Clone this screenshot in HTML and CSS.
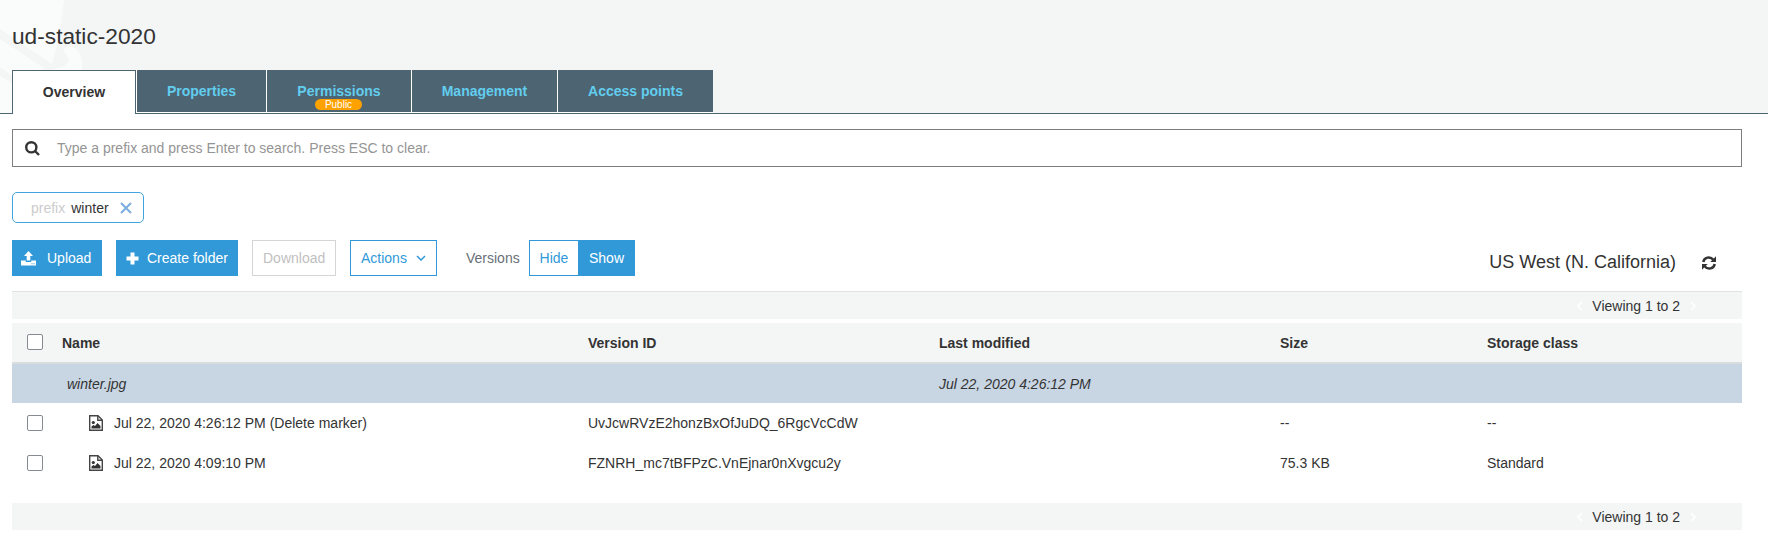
FILE: index.html
```html
<!DOCTYPE html>
<html lang="en">
<head>
<meta charset="utf-8">
<title>ud-static-2020</title>
<link rel="stylesheet" href="styles.css">
</head>
<body>
<header class="header">
  <svg class="watermark" width="100" height="113" viewBox="0 0 100 113"><path class="wm-light" d="M0 0H64Q61 32 52 64L0 29z"/><path class="wm-light" d="M0 39L44 68L41 76L12 76L0 67zM0 76L12 83V113H0z"/><path class="wm-light" d="M63 50Q67 45 73 47Q83 52 82 70H52L62 67Q71 63 68 57z"/></svg>
  <h1 class="title">ud-static-2020</h1>
  <nav class="tabs">
    <a class="tab tab-active">Overview</a>
    <a class="tab tab-properties">Properties</a>
    <a class="tab tab-permissions">Permissions<span class="badge">Public</span></a>
    <a class="tab tab-management">Management</a>
    <a class="tab tab-access">Access points</a>
  </nav>
</header>
<main class="main">
  <div class="search">
    <svg class="search-icon" width="15" height="15" viewBox="0 0 15 15"><circle cx="6.3" cy="6.3" r="5.1"/><path d="M10 10L14 14"/></svg>
    <span>Type a prefix and press Enter to search. Press ESC to clear.</span>
  </div>
  <div class="chip">
    <span class="chip-key">prefix</span><span class="chip-value">winter</span>
    <svg class="chip-close" width="12" height="12" viewBox="0 0 12 12"><path d="M1 1L11 11M11 1L1 11"/></svg>
  </div>
  <div class="toolbar">
    <button class="btn primary upload"><svg width="15" height="15" viewBox="0 0 15 15"><path d="M7.5 0L12 5H9.3V9.5H5.7V5H3z"/><path fill-rule="evenodd" d="M0 9.5H4.8V11H10.2V9.5H15V14.5H0zM10.5 12.3h1v1h-1zM12.6 12.3h1v1h-1z"/></svg>Upload</button>
    <button class="btn primary create"><svg width="13" height="13" viewBox="0 0 13 13"><path d="M4.500 0.500H8.500V4.500H12.500V8.500H8.500V12.500H4.500V8.500H0.500V4.500H4.500z"/></svg>Create folder</button>
    <button class="btn disabled">Download</button>
    <button class="btn outline">Actions<svg class="chevron" width="10" height="6" viewBox="0 0 10 6"><path d="M1 1L5 5L9 1"/></svg></button>
    <span class="versions">Versions</span>
    <div class="toggle"><span class="hide">Hide</span><span class="show">Show</span></div>
    <span class="region">US West (N. California)</span>
    <svg class="refresh" width="14" height="14" viewBox="0 0 14 14"><path class="arc" d="M1.300 6C2 1.200 8.200-.200 11.300 3.800M12.700 8C12 12.800 5.800 14.200 2.700 10.200"/><path d="M14 .3V6H8.300zM0 13.700V8H5.700z"/></svg>
  </div>
  <div class="pager pager-top">
    <svg class="arrow" width="6" height="10" viewBox="0 0 6 10"><path d="M5 1L1 5L5 9"/></svg><span>Viewing 1 to 2</span><svg class="arrow" width="6" height="10" viewBox="0 0 6 10"><path d="M1 1L5 5L1 9"/></svg>
  </div>
  <div class="grid head">
    <span class="check"></span><span>Name</span><span>Version ID</span><span>Last modified</span><span>Size</span><span>Storage class</span>
  </div>
  <div class="grid group">
    <span></span><span class="group-name">winter.jpg</span><span></span><span>Jul 22, 2020 4:26:12 PM</span><span></span><span></span>
  </div>
  <div class="grid row">
    <span class="check"></span>
    <span class="file"><svg width="14" height="16" viewBox="0 0 14 16"><path class="page" d="M.7.7H9L13.300 5V15.300H.7z"/><path class="fold" d="M8.800 1V5.300H13"/><circle cx="4.300" cy="7.500" r="1.600"/><path d="M2.500 13.500V11.500L4.500 10L6 11L8.500 8L11.500 11V13.500z"/></svg>Jul 22, 2020 4:26:12 PM (Delete marker)</span>
    <span>UvJcwRVzE2honzBxOfJuDQ_6RgcVcCdW</span><span></span><span>--</span><span>--</span>
  </div>
  <div class="grid row">
    <span class="check"></span>
    <span class="file"><svg width="14" height="16" viewBox="0 0 14 16"><path class="page" d="M.7.7H9L13.300 5V15.300H.7z"/><path class="fold" d="M8.800 1V5.300H13"/><circle cx="4.300" cy="7.500" r="1.600"/><path d="M2.500 13.500V11.500L4.500 10L6 11L8.500 8L11.500 11V13.500z"/></svg>Jul 22, 2020 4:09:10 PM</span>
    <span>FZNRH_mc7tBFPzC.VnEjnar0nXvgcu2y</span><span></span><span>75.3 KB</span><span>Standard</span>
  </div>
  <div class="pager pager-bottom">
    <svg class="arrow" width="6" height="10" viewBox="0 0 6 10"><path d="M5 1L1 5L5 9"/></svg><span>Viewing 1 to 2</span><svg class="arrow" width="6" height="10" viewBox="0 0 6 10"><path d="M1 1L5 5L1 9"/></svg>
  </div>
</main>
</body>
</html>
```
FILE: styles.css
```css
* { box-sizing: border-box; }
body { margin: 0; background: #fff; color: #333; font: 14px/20px "Liberation Sans", Arial, sans-serif; overflow: hidden; }
svg { display: block; flex: none; }
.header { position: relative; height: 114px; padding: 22px 12px 0; background: #f4f6f6; border-bottom: 1px solid #4d6472; }
.watermark { position: absolute; left: 0; top: 0; }
.wm-light { fill: #fafcfb; }
.title { position: relative; margin: 0 0 20px; font-size: 22.7px; font-weight: 400; line-height: 28px; }
.tabs { position: relative; display: flex; align-items: flex-start; gap: 1px; width: 701px; height: 43px; background: #fff; }
.tab { position: relative; height: 42px; background: #4d6472; color: #62cdee; font-weight: 700; line-height: 42px; text-align: center; }
.tab-active { width: 124px; height: 44px; background: #fff; border: 1px solid #4d6472; border-bottom: 0; color: #333; }
.tab-properties { width: 129px; }
.tab-permissions { width: 144px; }
.tab-management { width: 145px; }
.tab-access { width: 155px; }
.badge { position: absolute; left: 48px; top: 29px; width: 47px; height: 11px; border-radius: 6px; background: #ffa200; color: #fff; font-size: 10px; font-weight: 400; line-height: 11px; }
.main { padding: 15px 26px 0 12px; }
.search { display: flex; align-items: center; height: 38px; padding-left: 12px; border: 1px solid #7d7d7d; color: #959595; }
.search svg { margin-right: 17px; fill: none; stroke: #333; stroke-width: 2.400; }
.chip { display: flex; align-items: center; width: 132px; height: 31px; margin-top: 25px; padding-left: 18px; border: 1px solid #42a4de; border-radius: 5px; line-height: 31px; }
.chip-key, .chip-value { padding-top: 1px; }
.chip-key { color: #ccc; margin-right: 6px; }
.chip-close { margin-left: 11px; fill: none; stroke: #7badde; stroke-width: 2; }
.toolbar { display: flex; height: 51px; margin-top: 17px; }
.btn { display: flex; align-items: center; height: 36px; padding: 0 10px; border: 1px solid; font: inherit; white-space: nowrap; }
.primary { background: #3199d8; border-color: #3199d8; color: #fff; }
.primary svg { fill: #fff; }
.upload { width: 90px; padding-left: 8px; margin-right: 14px; }
.upload svg { margin-right: 11px; }
.create { width: 122px; padding-left: 9px; margin-right: 14px; }
.create svg { margin-right: 8px; }
.disabled { width: 84px; margin-right: 14px; background: #fff; border-color: #d5d5d5; color: #bfbfbf; }
.outline { width: 87px; background: #fff; border-color: #3199d8; color: #3199d8; }
.chevron { margin-left: 9px; fill: none; stroke: #3199d8; stroke-width: 1.500; }
.versions { margin-left: 29px; width: 63px; line-height: 36px; color: #687078; }
.toggle { display: flex; width: 106px; height: 36px; border: 1px solid #3199d8; line-height: 34px; text-align: center; }
.hide { width: 48px; color: #3199d8; }
.show { flex: 1; padding-left: 1px; background: #3199d8; color: #fff; }
.region { margin-left: auto; font-size: 18px; line-height: 45px; }
.refresh { margin: 16px 26px 0; fill: #333; }
.arc { fill: none; stroke: #333; stroke-width: 2.500; }
.pager { display: flex; align-items: center; justify-content: flex-end; gap: 10px; background: #f4f6f6; }
.arrow { fill: none; stroke: #fff; stroke-width: 1.500; }
.pager-top { height: 28px; padding-right: 46px; border-top: 1px solid #dfe3e3; }
.pager-bottom { height: 27px; margin-top: 20px; padding-right: 46px; }
.pager .arrow:first-child { margin-right: -1px; }
.grid { display: grid; grid-template-columns: 50px 526px 351px 341px 207px 255px; align-items: center; height: 40px; }
.head { height: 41px; margin-top: 4px; background: #f4f6f6; border-bottom: 2px solid #d9dddd; font-weight: 700; }
.group { height: 39px; background: #c8d5e3; font-style: italic; }
.group-name { padding-left: 5px; }
.check { width: 16px; height: 16px; margin-left: 15px; background: #fff; border: 1px solid #858b90; border-radius: 2px; }
.head .check { margin-bottom: 2px; }
.file { display: flex; align-items: center; padding-left: 27px; }
.file svg { margin-right: 11px; fill: #333; }
.page, .fold { fill: none; stroke: #444; stroke-width: 1.400; }
```
